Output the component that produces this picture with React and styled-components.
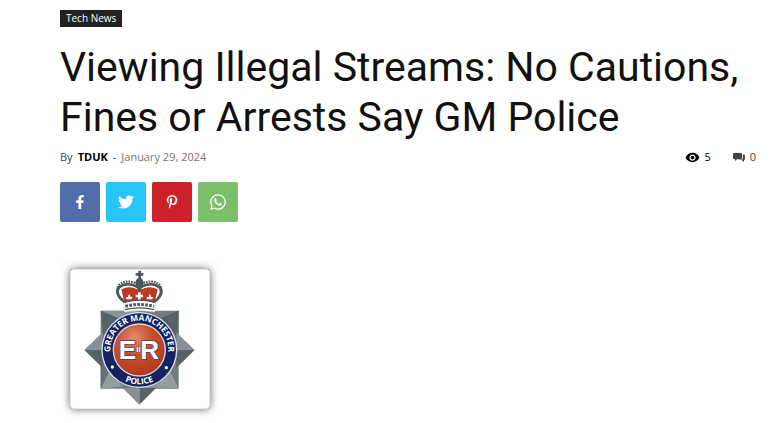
import styled, { createGlobalStyle } from "styled-components";
import { FaFacebookF, FaPinterestP, FaTwitter, FaWhatsapp } from "react-icons/fa";
import { MdVisibility } from "react-icons/md";

const GlobalStyle = createGlobalStyle`
    body {
        margin: 0;
        background: #fff;
        font-family: "Open Sans", sans-serif;
    }
`;
const Article = styled.article`
    padding: 10px 14px 13px 60px;
`;
const Category = styled.a`
    display: block;
    width: fit-content;
    padding: 3px 6px 4px;
    background: #222;
    color: #fff;
    font-size: 10px;
    font-weight: 500;
    line-height: 10px;
    text-decoration: none;
`;
const Title = styled.h1`
    margin: 15px 0 8px;
    color: #111;
    font-family: Roboto, sans-serif;
    font-size: 41px;
    font-weight: 400;
    line-height: 50px;
`;
const Meta = styled.div`
    display: flex;
    justify-content: space-between;
    height: 14px;
    font-size: 11px;
    line-height: 14px;
`;
const Byline = styled.div`
    display: flex;
    gap: 5px;
    color: #444;
`;
const Author = styled.a`
    color: #000;
    font-weight: 700;
    text-decoration: none;
`;
const PostDate = styled.time`
    color: #767676;
`;
const Stats = styled.div`
    display: flex;
    gap: 22px;
`;
const Stat = styled.span`
    display: flex;
    align-items: center;
    gap: 4px;
    color: ${(props) => props.$color};
`;
const StatLink = styled(Stat)`
    text-decoration: none;
`;
const ShareList = styled.div`
    display: flex;
    gap: 6px;
    margin-top: 18px;
`;
const ShareLink = styled.a`
    display: flex;
    align-items: center;
    justify-content: center;
    width: 40px;
    height: 40px;
    border-radius: 2px;
    background: ${(props) => props.$color};
    color: #fff;
    font-size: ${(props) => props.$size}px;
`;
const Figure = styled.figure`
    width: 140px;
    margin: 47px 10px 0;
    border-radius: 3px;
    background: #fff;
    box-shadow: inset 0 0 1px #000, 0 0 8px rgba(0, 0, 0, 0.6);
`;
const Crest = styled.svg`
    display: block;
    width: 100%;
    font-family: "Open Sans", sans-serif;
    font-weight: 700;
`;

const networks = [
  { name: "Facebook", color: "#516eab", size: 14, Icon: FaFacebookF },
  { name: "Twitter", color: "#29c5f6", size: 16, Icon: FaTwitter },
  { name: "Pinterest", color: "#ca212a", size: 14, Icon: FaPinterestP },
  { name: "WhatsApp", color: "#7bbf6a", size: 18, Icon: FaWhatsapp },
];

const CommentsIcon = () => (
  <svg width="13" height="10" viewBox="0 0 13 10" fill="currentColor" aria-hidden="true">
    <path d="M1 1h7q1 0 1 1v4q0 1-1 1H4.300L2 9V7H1Q0 7 0 6V2q0-1 1-1z" />
    <path d="M9.800 2.500h1.200q1 0 1 1V7q0 1-1 1v2L8.500 8H5l.7-.5h3.100q1 0 1-1z" />
  </svg>
);

const PoliceCrest = () => (
  <Crest viewBox="30 27 420 420" role="img" aria-label="Greater Manchester Police">
    <defs>
      <radialGradient id="enamel" cx="0.4" cy="0.25" r="0.75">
        <stop offset="0" stopColor="#e08e6e" />
        <stop offset="0.45" stopColor="#c9502f" />
        <stop offset="1" stopColor="#b5381c" />
      </radialGradient>
      <path id="ringTop" d="M163 313a87 87 0 1 1 150 0" />
      <path id="ringBottom" d="M135 270a103 103 0 0 0 206 0" />
    </defs>
    {/* star */}
    <path fill="#737d7f" d="M122 152h234v234H122z" />
    <path fill="#8a9496" d="M122 152l116 118V152zM356 386L238 270v116z" />
    <path fill="#667073" d="M356 152L238 270h118zM122 386l116-116H122z" />
    <path fill="#879193" d="M73 270l55-53v53zM404 270l-55-53v53zM238 434l-50-50h50z" />
    <path fill="#596265" d="M73 270l55 54v-54zM404 270l-55 54v-54zM238 434l50-50h-50z" />
    <path fill="#586265" d="M122 152l58 24-50 50zM356 152l-58 24 50 50z" />
    <path fill="#939d9e" d="M122 386l25-50 43 43zM356 386l-25-50-43 43z" />
    {/* ring */}
    <circle cx="238" cy="270" r="114" fill="#dce1ef" />
    <circle cx="238" cy="270" r="110" fill="#152363" />
    <circle cx="238" cy="270" r="80" fill="#d8d9e2" />
    <circle cx="238" cy="270" r="76" fill="url(#enamel)" />
    <g fill="#fff" fontSize="25">
      <text textAnchor="middle"><textPath href="#ringTop" startOffset="50%">GREATER MANCHESTER</textPath></text>
      <text textAnchor="middle"><textPath href="#ringBottom" startOffset="50%">POLICE</textPath></text>
    </g>
    <circle cx="157" cy="321" r="5" fill="#fff" />
    <circle cx="319" cy="323" r="5" fill="#fff" />
    <g fill="#fff" stroke="#45436c" strokeWidth="4" paintOrder="stroke" fontFamily="Liberation Sans, sans-serif">
      <text x="176" y="298" fontSize="78">E</text>
      <text x="241" y="298" fontSize="78">R</text>
      <text x="229" y="277" fontSize="24" strokeWidth="2">II</text>
    </g>
    {/* crown */}
    <path fill="#fff" stroke="#c3c8c9" strokeWidth="2" d="M190 122q48-14 97 0l-3 34q-45-9-91 0z" />
    <path fill="#bd391f" d="M184 88q30-14 54 5q26-19 55-5l-9 40q-45-13-91 0z" />
    <g fill="none" stroke="#4c575b" strokeWidth="8">
      <path d="M194 126q-32-24-17-44q22-17 52-3q9 5 9 14q0-9 9-14q30-14 52 3q15 20-17 44" />
      <path strokeWidth="7" strokeDasharray="5 3" d="M185 120q-22-26-7-46q22-17 52-3M291 120q22-26 7-46q-22-17-52-3" />
    </g>
    <path fill="#4c575b" d="M235 32h8v7h7v8h-7v7q8 5 8 15q0 9-9 17h-7q-9-8-9-17q0-10 9-15v-7h-8v-8h8z" />
    <path fill="#fff" d="M234 97h8v7h7v8h-7v7h-8v-7h-7v-8h7zM207 101l5 10 6 1-4 6h-14l-3-6 7-1zM269 101l5 10 6 1-4 6h-14l-3-6 7-1z" />
    <path fill="none" stroke="#4c575b" strokeWidth="4" d="M192 127q46-13 92 0M195 149q43-11 87 0" />
    <path fill="none" stroke="#4c575b" strokeWidth="9" strokeDasharray="8 4" d="M196 139q43-11 86 0" />
  </Crest>
);

const App = () => {
  return (
    <Article>
      <GlobalStyle />
      <Category href="#tech-news">Tech News</Category>
      <Title>Viewing Illegal Streams: No Cautions, Fines or Arrests Say GM Police</Title>
      <Meta>
        <Byline>
          <span>By</span>
          <Author href="#tduk">TDUK</Author>
          <span>-</span>
          <PostDate dateTime="2024-01-29">January 29, 2024</PostDate>
        </Byline>
        <Stats>
          <Stat $color="#000"><MdVisibility size={15} />5</Stat>
          <StatLink as="a" href="#comments" $color="#444"><CommentsIcon />0</StatLink>
        </Stats>
      </Meta>
      <ShareList>
        {networks.map(({ name, color, size, Icon }) => (
          <ShareLink key={name} href={`#${name}`} aria-label={name} $color={color} $size={size}>
            <Icon />
          </ShareLink>
        ))}
      </ShareList>
      <Figure>
        <PoliceCrest />
      </Figure>
    </Article>
  );
};

export default App;
